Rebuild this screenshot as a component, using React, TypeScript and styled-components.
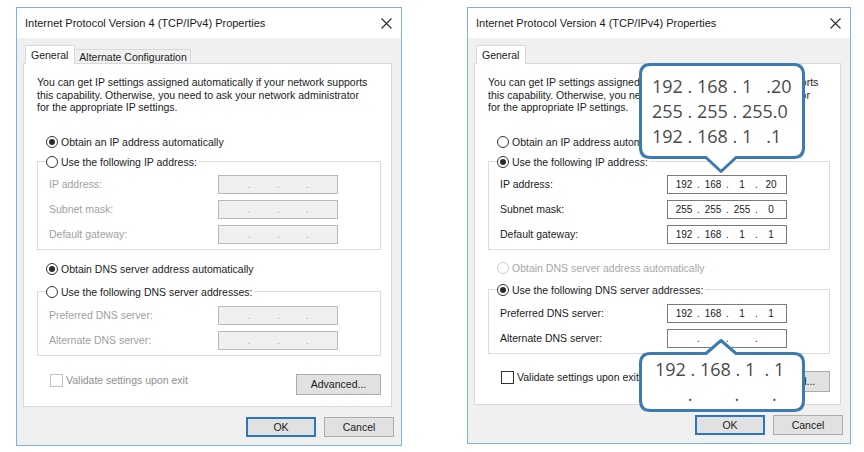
import React from 'react';
import styled, { createGlobalStyle, css } from 'styled-components';

const GlobalStyle = createGlobalStyle`
  html, body { margin: 0; padding: 0; background: #ffffff; }
  body { font-family: "Liberation Sans", Arial, sans-serif; color: #1b1b1b; }
  *, *::before, *::after { box-sizing: border-box; }
`;

const Page = styled.div`
  display: flex;
  align-items: flex-start;
  gap: 65px;
  padding: 7px 0 0 16px;
  width: 864px;
  height: 452px;
  background: #fff;
`;

const Dialog = styled.div<{ $w: number; $h: number }>`
  position: relative;
  width: ${p => p.$w}px;
  height: ${p => p.$h}px;
  border: 1px solid #7fb1da;
  background: #f0f0f0;
  display: flex;
  flex-direction: column;
  flex: none;
`;

const TitleBar = styled.div`
  height: 30px;
  background: #ffffff;
  display: flex;
  align-items: center;
  justify-content: space-between;
  padding: 0 9px 0 8px;
  font-size: 11px;
  color: #1a1a1a;
`;

const CloseIcon = () => (
  <svg width="11" height="11" viewBox="0 0 11 11">
    <path d="M0.5 0.5 L10.5 10.5 M10.5 0.5 L0.5 10.5" stroke="#2b2b2b" strokeWidth="1.1" fill="none" />
  </svg>
);

const TabStrip = styled.div`
  display: flex;
  align-items: flex-end;
  height: 19px;
  margin: 7px 0 -1px 8px;
  position: relative;
  z-index: 1;
`;

const Tab = styled.div<{ $active?: boolean }>`
  font-size: 10.5px;
  display: flex;
  align-items: center;
  border: 1px solid #d9d9d9;
  border-bottom: none;
  color: #1b1b1b;
  ${p =>
    p.$active
      ? css`
          height: 19px;
          padding: 0 6px 1px 5px;
          background: #ffffff;
        `
      : css`
          height: 14px;
          margin-bottom: 1px;
          padding: 0 3px 0 4px;
          background: #f0f0f0;
          border-left: none;
        `}
`;

const Panel = styled.div<{ $h: number }>`
  height: ${p => p.$h}px;
  margin: 0 9px 0 6px;
  background: #ffffff;
  border: 1px solid #d9d9d9;
  padding: 12px 10px 0 13px;
  display: flex;
  flex-direction: column;
`;

const Description = styled.p`
  margin: 0;
  font-size: 10.5px;
  line-height: 12.5px;
  color: #1b1b1b;
`;

const RadioRow = styled.label<{ $disabled?: boolean; $mt?: number }>`
  display: flex;
  align-items: center;
  gap: 3px;
  height: 14px;
  font-size: 10.5px;
  color: ${p => (p.$disabled ? '#a6a6a6' : '#1b1b1b')};
  margin-top: ${p => p.$mt ?? 0}px;
  margin-left: ${p => (p.$mt !== undefined ? 9 : 0)}px;
`;

const RadioCircle = styled.span<{ $checked?: boolean; $disabled?: boolean }>`
  width: 12px;
  height: 12px;
  flex: none;
  border-radius: 50%;
  border: 1px solid ${p => (p.$disabled ? '#cfcfcf' : '#333333')};
  background: #ffffff;
  display: inline-flex;
  align-items: center;
  justify-content: center;
  &::after {
    content: '';
    width: 6px;
    height: 6px;
    border-radius: 50%;
    background: #2a2a2a;
    display: ${p => (p.$checked ? 'block' : 'none')};
  }
`;

const Group = styled.fieldset<{ $mt: number; $pt?: number }>`
  margin: ${p => p.$mt}px 0 0 0;
  padding: ${p => p.$pt ?? 6}px 42px 5px 11px;
  border: 1px solid #dcdcdc;
  min-width: 0;
  display: flex;
  flex-direction: column;
  gap: 6px;
`;

const Legend = styled.legend`
  padding: 0 2px 0 0;
  margin-left: -3px;
  background: #ffffff;
`;

const FieldRow = styled.div<{ $disabled?: boolean }>`
  display: flex;
  align-items: center;
  justify-content: space-between;
  height: 19px;
  font-size: 10.5px;
  color: ${p => (p.$disabled ? '#a0a0a0' : '#1b1b1b')};
`;

const IpBox = styled.div<{ $disabled?: boolean }>`
  width: 120px;
  height: 19px;
  flex: none;
  display: flex;
  align-items: center;
  padding-left: 3px;
  border: 1px solid ${p => (p.$disabled ? '#b9b9b9' : '#7a7a7a')};
  background: ${p => (p.$disabled ? '#f0f0f0' : '#ffffff')};
  color: ${p => (p.$disabled ? '#a0a0a0' : '#1b1b1b')};
  font-size: 10px;
`;

const IpSeg = styled.span`
  width: 26px;
  text-align: center;
`;

const IpDot = styled.span`
  width: 3px;
  text-align: center;
`;

const IpField = ({ value, disabled }: { value?: string[]; disabled?: boolean }) => (
  <IpBox $disabled={disabled}>
    {[0, 1, 2, 3].map(i => (
      <React.Fragment key={i}>
        {i > 0 && <IpDot>.</IpDot>}
        <IpSeg>{value ? value[i] : ''}</IpSeg>
      </React.Fragment>
    ))}
  </IpBox>
);

const BottomRow = styled.div<{ $mt: number }>`
  display: flex;
  justify-content: space-between;
  align-items: flex-start;
  margin-top: ${p => p.$mt}px;
  padding-left: 13px;
`;

const CheckRow = styled.label<{ $disabled?: boolean }>`
  display: flex;
  align-items: center;
  gap: 3px;
  height: 13px;
  font-size: 10.5px;
  color: ${p => (p.$disabled ? '#8f8f8f' : '#1b1b1b')};
`;

const CheckBox = styled.span<{ $disabled?: boolean }>`
  width: 13px;
  height: 13px;
  flex: none;
  border: 1px solid ${p => (p.$disabled ? '#c2c2c2' : '#333333')};
  background: #ffffff;
`;

const Button = styled.div<{ $default?: boolean; $w?: number; $h?: number }>`
  width: ${p => p.$w ?? 70}px;
  height: ${p => p.$h ?? 20}px;
  display: flex;
  align-items: center;
  justify-content: center;
  font-size: 10.5px;
  color: #1b1b1b;
  background: #e1e1e1;
  border: ${p => (p.$default ? '2px solid #2c78c0' : '1px solid #adadad')};
`;

const Footer = styled.div<{ $mt: number }>`
  display: flex;
  justify-content: flex-end;
  gap: 8px;
  margin: ${p => p.$mt}px 7px 0 0;
`;

/* ---------- callouts ---------- */

const CalloutBox = styled.div<{ $x: number; $y: number; $w: number; $h: number; $pl: number; $pt: number }>`
  position: absolute;
  left: ${p => p.$x}px;
  top: ${p => p.$y}px;
  width: ${p => p.$w}px;
  height: ${p => p.$h}px;
  padding: ${p => p.$pt}px 0 0 ${p => p.$pl}px;
  z-index: 5;
`;

const CalloutShape = styled.svg`
  position: absolute;
  left: 0;
  overflow: visible;
  z-index: 0;
`;

const CalloutText = styled.div`
  position: relative;
  z-index: 1;
  font-family: "Open Sans", "Noto Sans", sans-serif;
  font-size: 18px;
  line-height: 25px;
  color: #4a4a4a;
  white-space: pre;
`;

function calloutPath(w: number, h: number, p: number, up: boolean, cx: number, half: number, r: number, s: number) {
  const y0 = up ? p + s : s;
  const y1 = up ? h + p - s : h - s;
  const x0 = s;
  const x1 = w - s;
  let d = `M ${x0 + r} ${y0}`;
  if (up) d += ` H ${cx - half} L ${cx} ${s} L ${cx + half} ${y0}`;
  d += ` H ${x1 - r} Q ${x1} ${y0} ${x1} ${y0 + r} V ${y1 - r} Q ${x1} ${y1} ${x1 - r} ${y1}`;
  if (!up) d += ` H ${cx + half} L ${cx} ${h + p - s} L ${cx - half} ${y1}`;
  d += ` H ${x0 + r} Q ${x0} ${y1} ${x0} ${y1 - r} V ${y0 + r} Q ${x0} ${y0} ${x0 + r} ${y0} Z`;
  return d;
}

const Callout = ({
  x, y, w, h, up, tip, half, pl, pt, children,
}: {
  x: number; y: number; w: number; h: number; up?: boolean; tip: number; half: number; pl: number; pt: number; children: React.ReactNode;
}) => (
  <CalloutBox $x={x} $y={y} $w={w} $h={h} $pl={pl} $pt={pt}>
    <CalloutShape
      width={w}
      height={h + tip}
      style={{ top: up ? -tip : 0 }}
      viewBox={`0 0 ${w} ${h + tip}`}
    >
      <path
        d={calloutPath(w, h, tip, !!up, 82, half, 10, 1.5)}
        fill="#ffffff"
        stroke="#3c7aaf"
        strokeWidth="3"
        strokeLinejoin="round"
      />
    </CalloutShape>
    <CalloutText>{children}</CalloutText>
  </CalloutBox>
);

/* ---------- dialog ---------- */

type Mode = 'auto' | 'manual';

const IPDialog = ({
  mode, width, height, panelH, tabs, compact, children,
}: {
  mode: Mode; width: number; height: number; panelH: number; tabs: string[]; compact?: boolean; children?: React.ReactNode;
}) => {
  const manual = mode === 'manual';
  const ip = manual ? ['192', '168', '1', '20'] : undefined;
  const mask = manual ? ['255', '255', '255', '0'] : undefined;
  const gw = manual ? ['192', '168', '1', '1'] : undefined;
  const dns = manual ? ['192', '168', '1', '1'] : undefined;
  return (
    <Dialog $w={width} $h={height}>
      <TitleBar>
        <span>Internet Protocol Version 4 (TCP/IPv4) Properties</span>
        <CloseIcon />
      </TitleBar>
      <TabStrip>
        {tabs.map((t, i) => (
          <Tab key={t} $active={i === 0}>{t}</Tab>
        ))}
      </TabStrip>
      <Panel $h={panelH}>
        <Description>
          You can get IP settings assigned automatically if your network supports
          <br />
          this capability. Otherwise, you need to ask your network administrator
          <br />
          for the appropriate IP settings.
        </Description>
        <RadioRow $mt={21}>
          <RadioCircle $checked={!manual} />
          Obtain an IP address automatically
        </RadioRow>
        <Group $mt={6}>
          <Legend>
            <RadioRow>
              <RadioCircle $checked={manual} />
              Use the following IP address:
            </RadioRow>
          </Legend>
          <FieldRow $disabled={!manual}>
            IP address:
            <IpField value={ip} disabled={!manual} />
          </FieldRow>
          <FieldRow $disabled={!manual}>
            Subnet mask:
            <IpField value={mask} disabled={!manual} />
          </FieldRow>
          <FieldRow $disabled={!manual}>
            Default gateway:
            <IpField value={gw} disabled={!manual} />
          </FieldRow>
        </Group>
        <RadioRow $mt={compact ? 11 : 12} $disabled={manual}>
          <RadioCircle $checked={!manual} $disabled={manual} />
          Obtain DNS server address automatically
        </RadioRow>
        <Group $mt={compact ? 8 : 9} $pt={7}>
          <Legend>
            <RadioRow>
              <RadioCircle $checked={manual} />
              Use the following DNS server addresses:
            </RadioRow>
          </Legend>
          <FieldRow $disabled={!manual}>
            Preferred DNS server:
            <IpField value={dns} disabled={!manual} />
          </FieldRow>
          <FieldRow $disabled={!manual}>
            Alternate DNS server:
            <IpField disabled={!manual} />
          </FieldRow>
        </Group>
        <BottomRow $mt={compact ? 17 : 18}>
          <CheckRow $disabled={!manual}>
            <CheckBox $disabled={!manual} />
            Validate settings upon exit
          </CheckRow>
          <Button $w={85} $h={21}>Advanced...</Button>
        </BottomRow>
      </Panel>
      <Footer $mt={10}>
        <Button $default>OK</Button>
        <Button>Cancel</Button>
      </Footer>
      {children}
    </Dialog>
  );
};

export default function App() {
  return (
    <>
      <GlobalStyle />
      <Page>
        <IPDialog mode="auto" width={386} height={439} panelH={344} tabs={['General', 'Alternate Configuration']} />
        <IPDialog mode="manual" width={384} height={437} panelH={342} tabs={['General']} compact>
          <Callout x={171} y={55} w={166} h={96} tip={14} half={15} pl={13} pt={11}>
            {'192 . 168 . 1   .20\n255 . 255 . 255.0\n192 . 168 . 1   .1'}
          </Callout>
          <Callout x={171} y={344} w={166} h={60} up tip={13} half={15} pl={16} pt={5}>
            {'192 . 168 . 1  . 1\n       .         .       .'}
          </Callout>
        </IPDialog>
      </Page>
    </>
  );
}
